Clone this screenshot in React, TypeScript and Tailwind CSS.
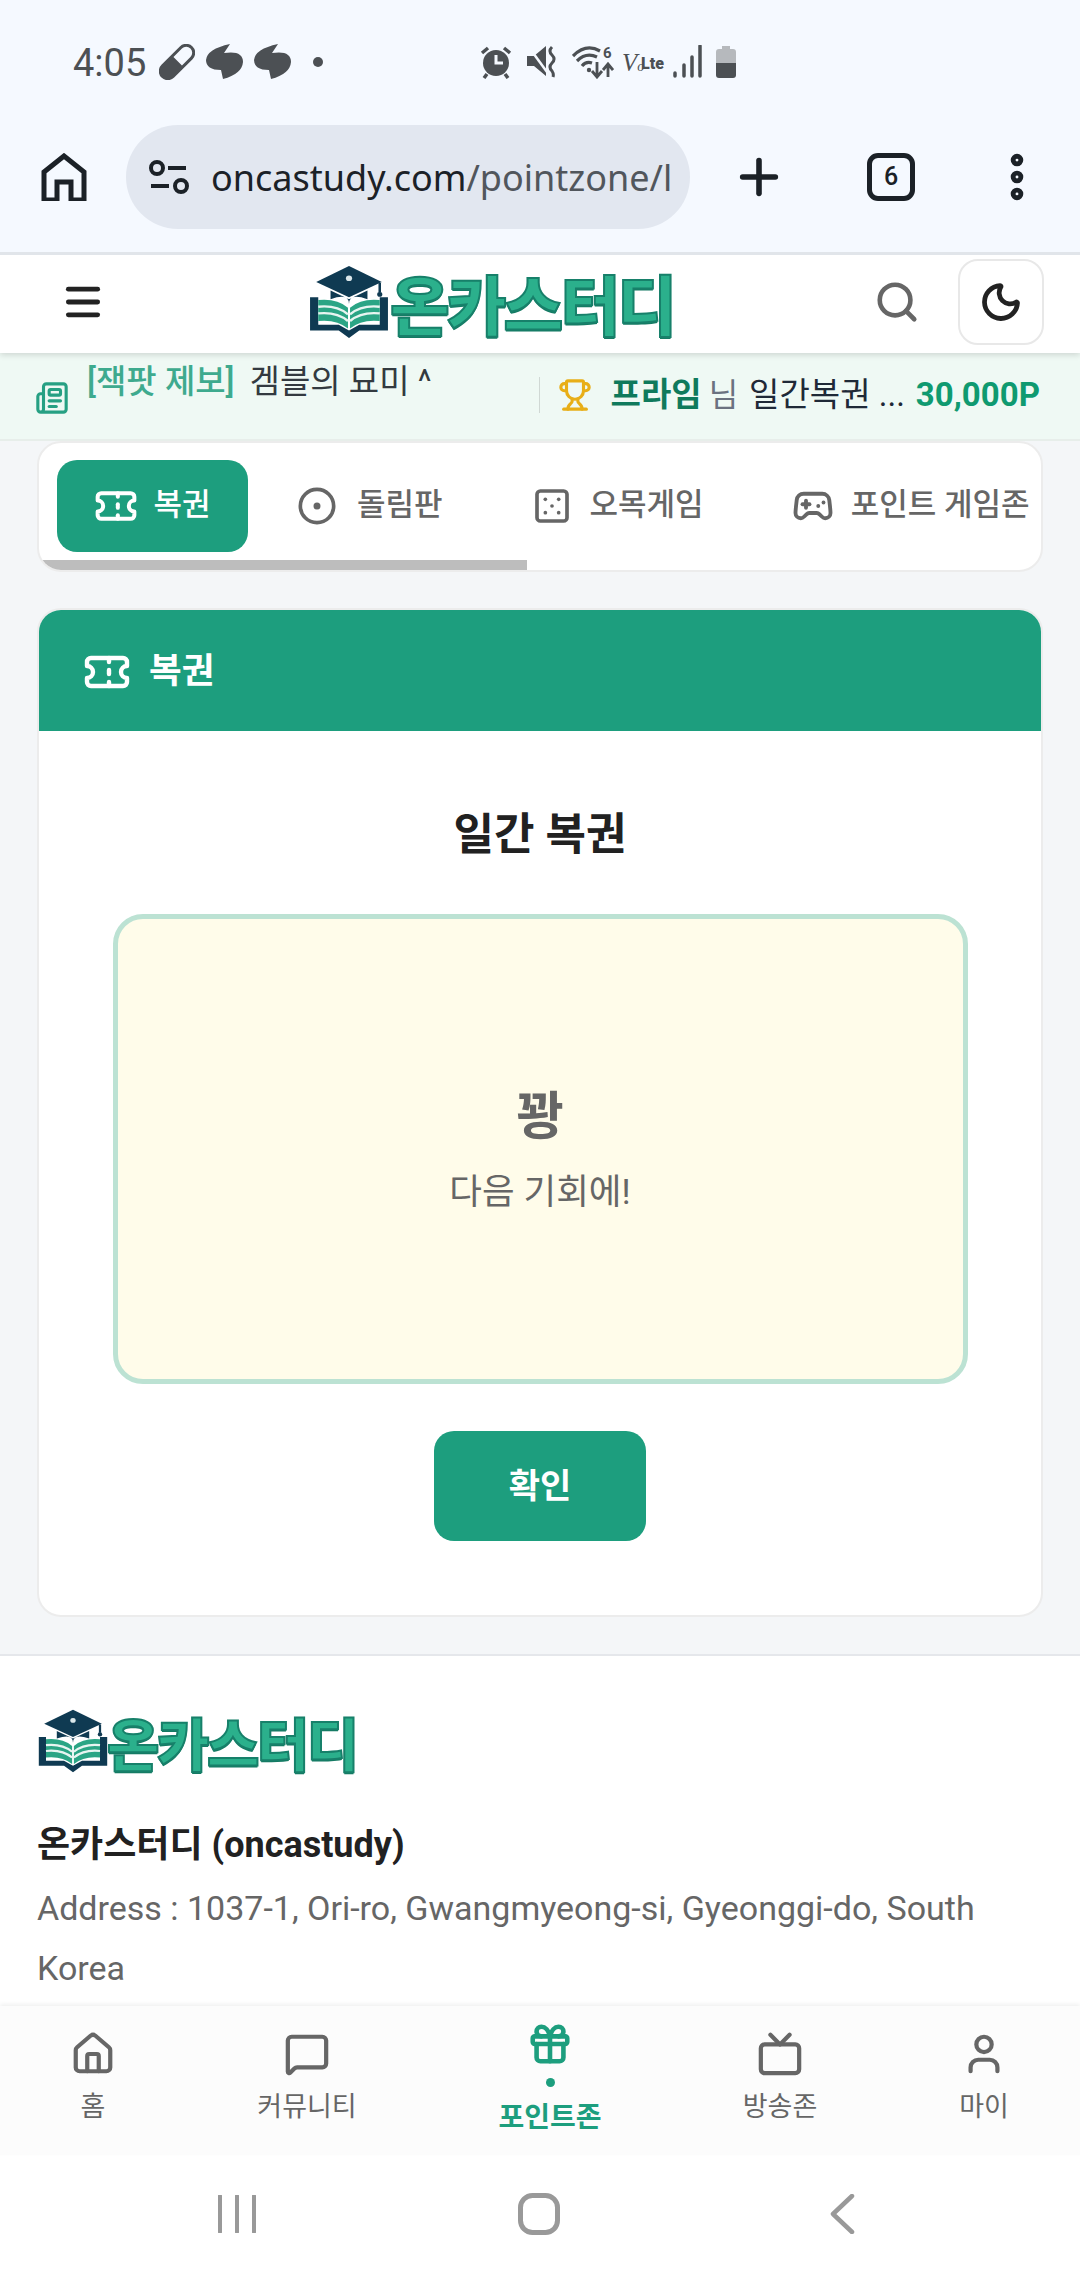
import React from "react";
import { Menu, Search, Moon, Newspaper, Trophy, Ticket, CircleDot, Dice5, Gamepad2, House, MessageSquare, Gift, Tv, User, Plus, EllipsisVertical } from "lucide-react";

const KR = "font-['Roboto','Noto_Sans_CJK_KR',sans-serif]";

function LogoMark({ w, h }: { w: number; h: number }) {
  return (
    <svg viewBox="0 0 80 80" height={h} width={w} preserveAspectRatio="none" className="shrink-0">
      <path d="M40 2 L72 19 L40 35 L8 19 Z" fill="#0f3a52" />
      <path d="M22 28 L40 37 L58 28 L58 37 Q40 30 40 42 Q40 30 22 37 Z" fill="#0f3a52" />
      <circle cx="40" cy="15" r="3" fill="#dbe7ea" />
      <path d="M70 20 V30" stroke="#0f3a52" strokeWidth="2.5" />
      <circle cx="70" cy="32" r="2.5" fill="#0f3a52" />
      <path d="M2 35 L2 70 L30 70 L40 78 L50 70 L78 70 L78 35 L70 35 L70 64 L50 64 L40 70 L30 64 L10 64 L10 35Z" fill="#0f3a52" />
      <path d="M10 38 Q28 36 39 46 V68 Q28 58 10 60 Z" fill="#2ba585" />
      <path d="M70 38 Q52 36 41 46 V68 Q52 58 70 60 Z" fill="#2ba585" />
      <path d="M10 45 Q28 43 39 53 M10 52 Q28 50 39 60 M70 45 Q52 43 41 53 M70 52 Q52 50 41 60" stroke="#e8f5f1" strokeWidth="2.5" fill="none" />
    </svg>
  );
}

function Logo({ big }: { big?: boolean }) {
  return big ? (
    <div className="flex items-center">
      <LogoMark w={82} h={76} />
      <span className="font-['Noto_Sans_CJK_KR',sans-serif] font-black text-[65px] leading-none tracking-[-3px] text-[#2bb08c] [-webkit-text-stroke:2px_#17806a] [text-shadow:0_2px_0_#157a63]">온카스터디</span>
    </div>
  ) : (
    <div className="flex items-center">
      <LogoMark w={72} h={66} />
      <span className="font-['Noto_Sans_CJK_KR',sans-serif] font-black text-[57px] leading-none tracking-[-2.5px] text-[#2bb08c] [-webkit-text-stroke:2px_#17806a] [text-shadow:0_2px_0_#157a63] -ml-[2px]">온카스터디</span>
    </div>
  );
}

const BLOB = "M24 0 L18 9 Q37 6 37 18 Q36 30 17 35 L15 26 Q0 26 0 16 Q1 5 24 0Z";

function Status() {
  const c = "#4c5054";
  return (
    <div className="h-[62px] mt-[31px] flex items-center pl-[73px] text-[#4c5054]">
      <span className="font-['Roboto',sans-serif] text-[38px] leading-none w-[86px] pt-[2px]">4:05</span>
      <svg width="36" height="36" viewBox="0 0 36 36"><g transform="rotate(45 18 18)"><rect x="9" y="-4" width="18" height="44" rx="9" fill={c} /><path d="M12 17 V5 a6 6 0 0 1 12 0 V17 Z" fill="#f5f9ff" /></g></svg>
      <svg width="38" height="36" viewBox="0 0 38 36" className="ml-[11px]"><path d={BLOB} fill={c} /></svg>
      <svg width="38" height="36" viewBox="0 0 38 36" className="ml-[10px]"><path d={BLOB} fill={c} /></svg>
      <span className="ml-[21px] w-[10px] h-[10px] rounded-full bg-[#4c5054]" />
      <div className="ml-[157px] flex items-center">
        <svg width="32" height="34" viewBox="0 0 32 34"><circle cx="16" cy="18" r="13" fill={c} /><path d="M16 10 V18 H23" stroke="#f5f9ff" strokeWidth="3" fill="none" /><path d="M2 8 L8 3 M30 8 L24 3 M7 29 L4 33 M25 29 L28 33" stroke={c} strokeWidth="3.5" /></svg>
        <svg width="30" height="34" viewBox="0 0 30 34" className="ml-[15px]"><path d="M0 11 H7 L19 1 V31 L7 21 H0Z" fill={c} /><path d="M1 1 L20 27" stroke="#f5f9ff" strokeWidth="2.5" /><path d="M25 2 Q21 6 25 10 Q29 14 25 18 Q21 22 25 26 Q27 29 26 32" stroke={c} strokeWidth="3" fill="none" /></svg>
        <svg width="42" height="34" viewBox="0 0 42 34" className="ml-[15px]"><path d="M1 11 Q14 -2 28 6 M5 16 Q14 7 25 12 M10 21 Q14 16 20 18" stroke={c} strokeWidth="3.2" fill="none" /><circle cx="17" cy="25" r="2.2" fill={c} /><path d="M25 17 V31 M20 26 L25 32 L30 26 M36 32 V20 M31 25 L36 19 L41 25" stroke={c} strokeWidth="2.8" fill="none" /><text x="31" y="13" fontSize="15" fontWeight="700" fontFamily="Roboto" fill={c}>6</text></svg>
        <span className="ml-[8px] w-[19px] font-['Liberation_Serif',serif] italic text-[25px] text-[#4c5054] leading-none whitespace-nowrap">V<span className="text-[14px]">o</span></span>
        <span className="w-[22px] font-['Roboto',sans-serif] font-black text-[16px] text-[#4c5054] leading-none mt-[4px]">Lte</span>
        <svg width="30" height="34" viewBox="0 0 30 34" className="ml-[9px]"><path d="M3 28 V31 M12 20 V31 M20 12 V31 M28 1 V31" stroke={c} strokeWidth="3.5" strokeLinecap="round" /></svg>
        <svg width="22" height="34" viewBox="0 0 22 34" className="ml-[13px]"><path d="M7 1 H15 V4 H18 a3 3 0 0 1 3 3 V18 H1 V7 a3 3 0 0 1 3 -3 H7Z" fill="#b6b9bd" /><path d="M1 18 H21 V30 a3 3 0 0 1 -3 3 H4 a3 3 0 0 1 -3 -3Z" fill={c} /></svg>
      </div>
    </div>
  );
}

function UrlRow() {
  return (
    <div className="flex items-center mt-[32px] h-[104px]">
      <svg width="46" height="48" viewBox="0 0 46 48" className="ml-[41px] shrink-0" fill="none" stroke="#1b2127" strokeWidth="5"><path d="M3 47 V19 L23 3 L43 19 V47 H30 V29 H16 V47 Z" /></svg>
      <div className="ml-[39px] w-[564px] h-[104px] rounded-full bg-[#e2e7f0] flex items-center pl-[22px] shrink-0">
        <svg width="42" height="36" viewBox="0 0 42 36" fill="none" stroke="#1b2127" strokeWidth="4" className="shrink-0"><circle cx="9" cy="9" r="6" /><path d="M20 9 H38 M3 27 H21" /><circle cx="33" cy="27" r="6" /></svg>
        <div className="ml-[21px] whitespace-nowrap font-['Noto_Sans',sans-serif] text-[36px] leading-none text-[#51565c] pt-[1px]"><span className="text-[#1b2127]">oncastudy.com</span>/pointzone/l</div>
      </div>
      <Plus size={56} strokeWidth={2.4} color="#1b2127" className="ml-[41px] shrink-0" />
      <div className="ml-[80px] w-[48px] h-[48px] shrink-0 rounded-[11px] border-[5px] border-[#1b2127] flex items-center justify-center font-['Roboto',sans-serif] font-medium text-[25px] text-[#1b2127]">6</div>
      <EllipsisVertical size={58} strokeWidth={3.2} color="#1b2127" className="ml-[73px] shrink-0" />
    </div>
  );
}

function TabItem({ icon, label, cls }: { icon: React.ReactNode; label: string; cls: string }) {
  return (
    <div className={`flex items-center shrink-0 whitespace-nowrap text-[#666666] font-medium text-[31px] ${cls}`}>
      {icon}
      <span className="-mt-[1px]">{label}</span>
    </div>
  );
}

function NavItem({ icon, label, cls }: { icon: React.ReactNode; label: string; cls: string }) {
  return (
    <div className={`flex flex-col items-center text-[#666666] ${cls}`}>
      {icon}
      <span className="text-[27px] leading-[30px] mt-[15px] whitespace-nowrap">{label}</span>
    </div>
  );
}

export default function App() {
  return (
    <div className={`w-[1080px] h-[2280px] flex flex-col overflow-hidden bg-[#f4f6f8] ${KR}`}>
      <div className="h-[252px] bg-[#f5f9ff] shrink-0 flex flex-col border-b-[3px] border-[#e1e5ea] box-content">
        <Status />
        <UrlRow />
      </div>
      <div className="flex-1 min-h-0 overflow-hidden flex flex-col">
        <header className="h-[98px] shrink-0 bg-white flex items-center pb-[4px] shadow-[0_2px_6px_rgba(0,0,0,0.14)] relative z-10">
          <Menu size={44} strokeWidth={2.6} color="#222222" className="ml-[61px]" />
          <div className="ml-[203px]"><Logo big /></div>
          <Search size={46} strokeWidth={2.4} color="#666666" className="ml-[200px]" />
          <div className="ml-[38px] w-[86px] h-[86px] rounded-[20px] border-2 border-[#e8e8e8] flex items-center justify-center">
            <Moon size={44} strokeWidth={2.6} color="#222222" />
          </div>
        </header>
        <div className="h-[88px] shrink-0 bg-[#eff9f4] flex items-start border-b-2 border-[#e7eeea]">
          <Newspaper size={34} strokeWidth={2.2} color="#26a083" className="ml-[35px] mt-[28px]" />
          <span className="ml-[18px] mt-[9px] text-[33px] leading-[40px] font-medium text-[#3eaa8e] whitespace-nowrap">[잭팟 제보]</span>
          <span className="ml-[15px] mt-[9px] text-[33px] leading-[40px] text-[#333a40] whitespace-nowrap w-[289px]">겜블의 묘미 ^</span>
          <div className="mt-[24px] h-[36px] w-px bg-[#d0d8d4]" />
          <Trophy size={34} strokeWidth={2.2} color="#e8ae17" className="ml-[18px] mt-[25px]" />
          <span className="ml-[19px] mt-[22px] text-[33px] leading-[40px] font-bold text-[#0f7a5c] whitespace-nowrap">프라임</span>
          <span className="ml-[7px] mt-[22px] text-[32px] leading-[40px] text-[#6b7280] whitespace-nowrap">님</span>
          <span className="ml-[11px] mt-[22px] text-[33px] leading-[40px] text-[#1f2937] whitespace-nowrap">일간복권 ...</span>
          <span className="ml-[11px] mt-[22px] text-[33px] leading-[40px] font-bold text-[#0f9a70] whitespace-nowrap">30,000P</span>
        </div>
        <div className="mx-[37px] h-[131px] shrink-0 rounded-[24px] bg-white border-2 border-[#ececec] overflow-hidden flex flex-col">
          <div className="h-[117px] shrink-0 flex items-start pt-[17px] pl-[18px]">
            <div className="w-[191px] h-[92px] shrink-0 rounded-[20px] bg-[#1d9e7e] text-white flex items-center justify-center font-medium text-[31px]">
              <Ticket size={44} strokeWidth={2.2} className="mr-[15px]" /><span className="-mt-[1px]">복권</span>
            </div>
            <TabItem cls="ml-[49px] h-[92px]" icon={<CircleDot size={40} strokeWidth={2.2} className="mr-[20px]" />} label="돌림판" />
            <TabItem cls="ml-[89px] h-[92px]" icon={<Dice5 size={40} strokeWidth={2.2} className="mr-[18px]" />} label="오목게임" />
            <TabItem cls="ml-[88px] h-[92px]" icon={<Gamepad2 size={42} strokeWidth={2.2} className="mr-[17px]" />} label="포인트 게임존" />
          </div>
          <div className="h-[10px] w-[488px] shrink-0 bg-[#bdbdbd]" />
        </div>
        <div className="mx-[37px] mt-[36px] shrink-0 h-[1009px] rounded-[24px] bg-white border-2 border-[#ececec] overflow-hidden flex flex-col items-center">
          <div className="w-full h-[121px] shrink-0 bg-[#1d9e7e] flex items-center pl-[44px] pt-[2px] text-white font-bold text-[35.5px]">
            <Ticket size={48} strokeWidth={2.2} className="mr-[18px]" />복권
          </div>
          <h2 className="mt-[78px] text-[44px] leading-[52px] font-bold text-[#212121]">일간 복권</h2>
          <div className="mt-[53px] w-[855px] h-[470px] shrink-0 rounded-[30px] bg-[#fffcea] border-[5px] border-[#bce2d3] flex flex-col items-center pt-[167px]">
            <div className="text-[52px] leading-[64px] font-bold text-[#666666]">꽝</div>
            <div className="mt-[20px] text-[35.5px] leading-[44px] text-[#666666]">다음 기회에!</div>
          </div>
          <div className="mt-[47px] w-[212px] h-[110px] rounded-[20px] bg-[#1d9e7e] text-white flex items-center justify-center font-bold text-[34px]">확인</div>
        </div>
        <footer className="mt-[37px] flex-1 bg-white border-t-2 border-[#e5e7eb] pl-[37px] pt-[52px]">
          <Logo />
          <div className="mt-[46px] text-[36px] leading-[50px] font-bold text-[#212121]">온카스터디 (oncastudy)</div>
          <div className="mt-[8px] text-[34px] leading-[60px] text-[#666666] w-[1000px]">Address : 1037-1, Ori-ro, Gwangmyeong-si, Gyeonggi-do, South Korea</div>
        </footer>
      </div>
      <nav className="h-[149px] shrink-0 bg-[#fcfcfc] shadow-[0_-2px_4px_rgba(0,0,0,0.06)] flex items-start relative z-10">
        <NavItem cls="w-[54px] ml-[66px] mt-[25px]" icon={<House size={46} strokeWidth={2.2} />} label="홈" />
        <NavItem cls="w-[120px] ml-[127px] mt-[25px]" icon={<MessageSquare size={46} strokeWidth={2.2} />} label="커뮤니티" />
        <div className="w-[120px] ml-[123px] mt-[15px] flex flex-col items-center text-[#1d9e7e]">
          <Gift size={46} strokeWidth={2.4} />
          <span className="w-[9px] h-[9px] rounded-full bg-[#1d9e7e] mt-[11px]" />
          <span className="text-[28px] leading-[30px] font-bold mt-[16px] whitespace-nowrap">포인트존</span>
        </div>
        <NavItem cls="w-[120px] ml-[110px] mt-[25px]" icon={<Tv size={46} strokeWidth={2.2} />} label="방송존" />
        <NavItem cls="w-[70px] ml-[109px] mt-[25px]" icon={<User size={46} strokeWidth={2.2} />} label="마이" />
      </nav>
      <div className="h-[125px] shrink-0 bg-white flex items-center pb-[7px]">
        <svg width="40" height="38" viewBox="0 0 40 38" className="ml-[217px]"><path d="M3 1 V37 M20 1 V37 M37 1 V37" stroke="#999999" strokeWidth="4" strokeLinecap="round" /></svg>
        <svg width="42" height="42" viewBox="0 0 42 42" className="ml-[261px]"><rect x="2.5" y="2.5" width="37" height="37" rx="12" fill="none" stroke="#999999" strokeWidth="5" /></svg>
        <svg width="26" height="40" viewBox="0 0 26 40" className="ml-[269px]"><path d="M23 2 L4 20 L23 38" fill="none" stroke="#999999" strokeWidth="4.5" strokeLinecap="round" strokeLinejoin="round" /></svg>
      </div>
    </div>
  );
}
